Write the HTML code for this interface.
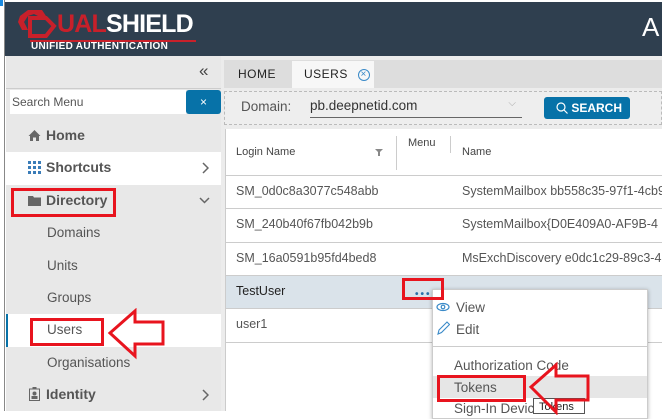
<!DOCTYPE html>
<html><head><style>
*{margin:0;padding:0;box-sizing:border-box}
body{width:662px;height:411px;overflow:hidden;position:relative;background:#fff;font-family:"Liberation Sans",sans-serif;font-size:13px;color:#555}
.a{position:absolute}
.red{position:absolute;border:3px solid #e8141e}
</style></head><body>
<div class="a" style="left:0;top:0;width:5px;height:411px;background:#fff;border-right:1px solid #888"></div>
<div class="a" style="left:0;top:0;width:3px;height:6px;background:#1a8ae0"></div>
<div class="a" style="left:5px;top:2px;width:657px;height:54px;background:#2f3f4f"></div>
<svg class="a" style="left:16px;top:8px" width="50" height="32" viewBox="0 0 50 32"><path d="M4 8 L12 2 L26 2 L30 8 L22 8 L18 6 L12 8 L8 14 L12 22 L6 22 L2 14Z" fill="#c8202a"/><path d="M14 10 L30 10 L38 18 L30 28 L14 28 Z" fill="none" stroke="#c8202a" stroke-width="4"/></svg>
<div class="a" style="left:57px;top:10px;font-size:25px;font-weight:bold;color:#c8202a;letter-spacing:-0.8px">UAL<span style="color:#fff">SHIELD</span></div>
<div class="a" style="left:30px;top:40px;width:166px;height:2px;background:#c8202a"></div>
<div class="a" style="left:31px;top:41px;font-size:10px;font-weight:bold;color:#fff;letter-spacing:0.3px">UNIFIED AUTHENTICATION</div>
<div class="a" style="left:642px;top:12px;font-size:26px;color:#fff">A</div>

<div class="a" style="left:6px;top:56px;width:215px;height:355px;background:#e8e8e8"></div>
<div class="a" style="left:199px;top:61px;font-size:17px;color:#444">«</div>
<div class="a" style="left:6px;top:88px;width:215px;height:1px;background:#ccc"></div>
<div class="a" style="left:10px;top:90px;width:176px;height:24px;background:#fff;padding:5px 2px;font-size:12px;color:#555">Search Menu</div>
<div class="a" style="left:186px;top:90px;width:35px;height:24px;background:#0772a8;border-radius:3px;color:#fff;text-align:center;line-height:24px;font-size:12px">×</div>
<div class="a" style="left:6px;top:152px;width:215px;height:33px;background:#fff"></div>
<div class="a" style="left:6px;top:314px;width:215px;height:33px;background:#fff;border-left:2px solid #0772a8"></div>
<svg class="a" style="left:28px;top:129px" width="13" height="13" viewBox="0 0 13 13"><path d="M6.5 1 L12.5 7 L11 7 L11 12 L8 12 L8 8.5 L5 8.5 L5 12 L2 12 L2 7 L0.5 7Z" fill="#666"/></svg>
<div class="a" style="left:46px;top:127px;font-size:14px;font-weight:bold;color:#555">Home</div>
<svg class="a" style="left:28px;top:161px" width="13" height="13"><g fill="#3a7cb8"><rect x="0" y="0" width="3" height="3"/><rect x="5" y="0" width="3" height="3"/><rect x="10" y="0" width="3" height="3"/><rect x="0" y="5" width="3" height="3"/><rect x="5" y="5" width="3" height="3"/><rect x="10" y="5" width="3" height="3"/><rect x="0" y="10" width="3" height="3"/><rect x="5" y="10" width="3" height="3"/><rect x="10" y="10" width="3" height="3"/></g></svg>
<div class="a" style="left:46px;top:159px;font-size:14px;font-weight:bold;color:#555">Shortcuts</div>
<svg class="a" style="left:202px;top:162px" width="7" height="12"><path d="M1 1 L6 6 L1 11" fill="none" stroke="#666" stroke-width="1.5"/></svg>
<svg class="a" style="left:28px;top:195px" width="13" height="11"><path d="M0 1 H5 L6 2.5 H13 V11 H0Z" fill="#666"/></svg>
<div class="a" style="left:46px;top:192px;font-size:14px;font-weight:bold;color:#555">Directory</div>
<svg class="a" style="left:199px;top:197px" width="11" height="7"><path d="M1 1 L5.5 5.5 L10 1" fill="none" stroke="#666" stroke-width="1.5"/></svg>
<div class="a" style="left:47px;top:225px;font-size:13.5px">Domains</div>
<div class="a" style="left:47px;top:258px;font-size:13.5px">Units</div>
<div class="a" style="left:47px;top:290px;font-size:13.5px">Groups</div>
<div class="a" style="left:47px;top:322px;font-size:13.5px">Users</div>
<div class="a" style="left:47px;top:355px;font-size:13.5px">Organisations</div>
<svg class="a" style="left:29px;top:387px" width="11" height="14"><rect x="0.5" y="2" width="10" height="11.5" fill="none" stroke="#666"/><circle cx="5.5" cy="6.5" r="2" fill="#666"/><rect x="2.5" y="9" width="6" height="3" fill="#666"/><rect x="3.5" y="0" width="4" height="2.5" fill="#666"/></svg>
<div class="a" style="left:46px;top:386px;font-size:14px;font-weight:bold;color:#555">Identity</div>
<svg class="a" style="left:202px;top:389px" width="7" height="12"><path d="M1 1 L6 6 L1 11" fill="none" stroke="#666" stroke-width="1.5"/></svg>

<div class="a" style="left:221px;top:56px;width:441px;height:355px;background:#ececec"></div>
<div class="a" style="left:224px;top:60px;width:438px;height:28px;background:#ddd"></div>
<div class="a" style="left:224px;top:60px;width:66px;height:28px;font-size:12px;color:#222;text-align:center;line-height:29px;letter-spacing:0.5px">HOME</div>
<div class="a" style="left:292px;top:61px;width:82px;height:27px;background:#f7f7f7;font-size:12px;color:#222;padding-left:12px;line-height:27px;letter-spacing:0.5px">USERS <span style="display:inline-block;margin-left:6px;width:12px;height:12px;border:1px solid #3a8ac8;border-radius:50%;color:#3a8ac8;font-size:10px;line-height:10px;text-align:center;vertical-align:middle">×</span></div>
<div class="a" style="left:224px;top:91px;width:438px;height:34px;border:1px dashed #bbb;background:#eee"></div>
<div class="a" style="left:241px;top:99px;font-size:13.5px;color:#555">Domain:</div>
<div class="a" style="left:310px;top:98px;width:212px;height:20px;border-bottom:1px solid #666;font-size:13.5px;color:#333">pb.deepnetid.com<span style="position:absolute;right:6px;top:0;color:#aaa;font-size:10px">⌵</span></div>
<div class="a" style="left:544px;top:97px;width:86px;height:22px;background:#0772a8;border-radius:3px;color:#fff;font-size:12px;font-weight:bold;line-height:22px;padding-left:12px">
<svg style="vertical-align:-2px" width="12" height="12"><circle cx="5" cy="5" r="4" fill="none" stroke="#fff" stroke-width="1.2"/><path d="M8 8 L11.5 11.5" stroke="#fff" stroke-width="1.2"/></svg> SEARCH</div>

<div class="a" style="left:225px;top:129px;width:437px;height:282px;background:#fff;border-left:1px solid #ccc"></div>
<div class="a" style="left:225px;top:175px;width:437px;height:1px;background:#ccc"></div>
<div class="a" style="left:236px;top:146px;font-size:11px;color:#444">Login Name</div>
<svg class="a" style="left:375px;top:149px" width="8" height="8"><path d="M0 0 H8 L5 3 V7 H3 V3Z" fill="#888"/></svg>
<div class="a" style="left:396px;top:136px;width:1px;height:34px;background:#ccc"></div>
<div class="a" style="left:408px;top:137px;font-size:11px;color:#444">Menu</div>
<div class="a" style="left:450px;top:136px;width:1px;height:17px;background:#ccc"></div>
<div class="a" style="left:462px;top:146px;font-size:11px;color:#444">Name</div>
<div class="a" style="left:226px;top:275px;width:436px;height:33px;background:#dae3ea"></div>
<div class="a" style="left:225px;top:208px;width:437px;height:1px;background:#ccc"></div>
<div class="a" style="left:225px;top:242px;width:437px;height:1px;background:#ccc"></div>
<div class="a" style="left:225px;top:275px;width:437px;height:1px;background:#ccc"></div>
<div class="a" style="left:225px;top:308px;width:437px;height:1px;background:#ccc"></div>
<div class="a" style="left:225px;top:342px;width:437px;height:1px;background:#ccc"></div>
<div class="a" style="left:236px;top:184px;font-size:12.5px">SM_0d0c8a3077c548abb</div>
<div class="a" style="left:462px;top:184px;font-size:12.5px;white-space:nowrap">SystemMailbox bb558c35-97f1-4cb9</div>
<div class="a" style="left:236px;top:217px;font-size:12.5px">SM_240b40f67fb042b9b</div>
<div class="a" style="left:462px;top:217px;font-size:12.5px;white-space:nowrap">SystemMailbox{D0E409A0-AF9B-4</div>
<div class="a" style="left:236px;top:251px;font-size:12.5px">SM_16a0591b95fd4bed8</div>
<div class="a" style="left:462px;top:251px;font-size:12.5px;white-space:nowrap">MsExchDiscovery e0dc1c29-89c3-4</div>
<div class="a" style="left:236px;top:284px;font-size:12.5px;color:#222">TestUser</div>
<div class="a" style="left:236px;top:317px;font-size:12.5px">user1</div>
<div class="a" style="left:415px;top:289px;width:20px;font-size:10px;color:#2a70a8;letter-spacing:2px;font-weight:bold">•••</div>

<div class="a" style="left:432px;top:289px;width:216px;height:130px;background:#fff;border:1px solid #ccc;box-shadow:0 1px 4px rgba(0,0,0,.3)"></div>
<svg class="a" style="left:436px;top:302px" width="14" height="10"><ellipse cx="7" cy="5" rx="6" ry="3.5" fill="none" stroke="#3a8ac8" stroke-width="1.2"/><circle cx="7" cy="5" r="1.8" fill="none" stroke="#3a8ac8" stroke-width="1.2"/></svg>
<div class="a" style="left:456px;top:300px;font-size:13.5px;color:#555">View</div>
<svg class="a" style="left:437px;top:321px" width="13" height="14"><path d="M1 13 L2 9 L10 1 L12.5 3.5 L4.5 11.5Z" fill="none" stroke="#3a8ac8" stroke-width="1.1"/></svg>
<div class="a" style="left:456px;top:322px;font-size:13.5px;color:#555">Edit</div>
<div class="a" style="left:433px;top:346px;width:214px;height:1px;background:#ccc"></div>
<div class="a" style="left:454px;top:358px;font-size:13.5px;color:#555;white-space:nowrap">Authorization Code</div>
<div class="a" style="left:433px;top:376px;width:214px;height:22px;background:#e6e6e6"></div>
<div class="a" style="left:454px;top:380px;font-size:13.5px;color:#555">Tokens</div>
<div class="a" style="left:454px;top:401px;font-size:13.5px;color:#555;white-space:nowrap">Sign-In Devices</div>
<div class="a" style="left:533px;top:398px;width:52px;height:16px;background:#fff;border:1px solid #555;font-size:11px;color:#222;padding:2px 5px">Tokens</div>

<div class="red" style="left:11px;top:188px;width:105px;height:29px"></div>
<div class="red" style="left:30px;top:318px;width:74px;height:28px"></div>
<div class="red" style="left:402px;top:278px;width:42px;height:22px"></div>
<div class="red" style="left:437px;top:375px;width:89px;height:27px"></div>
<svg class="a" style="left:105px;top:308px" width="62" height="52"><path d="M5 25 L30 3 L30 14 L58 14 L58 36 L30 36 L30 48 Z" fill="none" stroke="#e8141e" stroke-width="3"/></svg>
<svg class="a" style="left:526px;top:360px" width="68" height="55"><path d="M5 27 L30 5 L30 16 L62 16 L62 40 L30 40 L30 52 Z" fill="none" stroke="#e8141e" stroke-width="3"/></svg>
</body></html>
